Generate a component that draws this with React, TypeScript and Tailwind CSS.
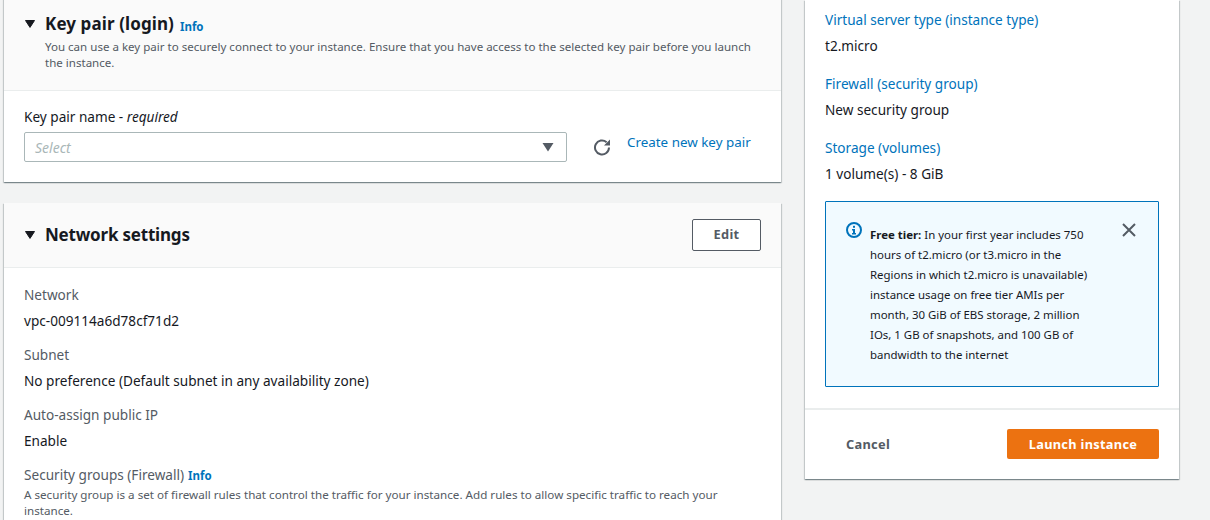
import React from "react";

const Info = () => <span className="text-[11.5px] font-bold text-[#0073bb] leading-4">Info</span>;

const Caret = () => (
  <svg width="14" height="14" viewBox="0 0 14 14" className="shrink-0">
    <path d="M1.5 3.5h9L6 10.4z" fill="#16191f" stroke="#16191f" strokeWidth="1" strokeLinejoin="round" />
  </svg>
);

const Field = ({ label, value, mt }: { label: string; value: string; mt: string }) => (
  <div className={mt}>
    <div className="text-[13.6px] leading-5 text-[#545b64]">{label}</div>
    <div className="mt-[6px] text-[13.6px] leading-5 text-[#16191f]">{value}</div>
  </div>
);

const SideField = ({ label, value, mt }: { label: string; value: string; mt: string }) => (
  <div className={mt}>
    <div className="text-[13.6px] leading-5 text-[#0073bb]">{label}</div>
    <div className="mt-[6px] text-[13.6px] leading-5 text-[#16191f]">{value}</div>
  </div>
);

const shadow = "shadow-[0_1px_1px_0_rgba(0,28,36,0.3),1px_1px_1px_0_rgba(0,28,36,0.15),-1px_1px_1px_0_rgba(0,28,36,0.15)]";

export default function App() {
  return (
    <div
      className="h-[520px] w-[1210px] overflow-hidden bg-[#f2f3f3] flex items-start"
      style={{ fontFamily: '"Noto Sans", sans-serif' }}
    >
      <div className="ml-1 w-[777px] shrink-0 -mt-2">
        <section className={`bg-white h-[190px] ${shadow}`}>
          <div className="h-[99px] bg-[#fafafa] border-b border-[#eaeded] pl-5 pr-5 pt-5">
            <div className="flex items-center h-6">
              <Caret />
              <h2 className="ml-[7px] text-[17px] font-bold leading-6 tracking-[0.1px] text-[#16191f]">Key pair (login)</h2>
              <span className="ml-[6px] mt-[5px] flex"><Info /></span>
            </div>
            <p className="ml-[21px] mt-[3px] text-[11.55px] leading-4 text-[#545b64] w-[715px]">
              You can use a key pair to securely connect to your instance. Ensure that you have access to the selected key pair before you launch the instance.
            </p>
          </div>
          <div className="px-5 pt-4">
            <div className="text-[13.6px] leading-5 text-[#16191f]">
              Key pair name - <em>required</em>
            </div>
            <div className="mt-[5px] flex items-start">
              <div className="w-[543px] h-[30px] border border-[#aab7b8] rounded-[2px] bg-white flex items-center justify-between pl-[10px] pr-[12px]">
                <span className="mt-[1px] text-[14px] italic text-[#aab7b8]">Select</span>
                <svg width="12" height="10" viewBox="0 0 12 10">
                  <path d="M0.5 1h11L6 9.5z" fill="#545b64" />
                </svg>
              </div>
              <svg className="ml-[26px] mt-[6px]" width="18" height="18" viewBox="0 0 18 18" fill="none">
                <path d="M16 9.5a7 7 0 1 1-2.4-5.3" stroke="#545b64" strokeWidth="2" />
                <path d="M17 1.5v6h-6z" fill="#545b64" />
              </svg>
              <span className="ml-4 text-[13.4px] leading-5 text-[#0073bb]">Create new key pair</span>
            </div>
          </div>
        </section>

        <section className={`mt-[21px] bg-white ${shadow}`}>
          <div className="h-[65px] bg-[#fafafa] border-b border-[#eaeded] pl-5 pr-5 flex items-center justify-between">
            <div className="flex items-center">
              <Caret />
              <h2 className="ml-[7px] text-[17px] font-bold leading-6 tracking-[-0.2px] text-[#16191f]">Network settings</h2>
            </div>
            <button className="w-[69px] h-8 border border-[#545b64] rounded-[2px] bg-white text-[12.8px] font-bold tracking-[0.3px] text-[#545b64]">Edit</button>
          </div>
          <div className="px-5 pt-[17px] pb-6">
            <Field label="Network" value="vpc-009114a6d78cf71d2" mt="" />
            <Field label="Subnet" value="No preference (Default subnet in any availability zone)" mt="mt-[14px]" />
            <Field label="Auto-assign public IP" value="Enable" mt="mt-[14px]" />
            <div className="mt-[14px] flex items-center">
              <span className="text-[13.6px] leading-5 text-[#545b64]">Security groups (Firewall)</span>
              <span className="ml-1 mt-[1px] flex"><Info /></span>
            </div>
            <p className="mt-[2px] text-[11.65px] leading-4 text-[#545b64] w-[715px]">
              A security group is a set of firewall rules that control the traffic for your instance. Add rules to allow specific traffic to reach your instance.
            </p>
          </div>
        </section>
      </div>

      <aside className={`ml-6 w-[374px] shrink-0 h-[479px] bg-white ${shadow}`}>
        <div className="h-[410px] border-b-2 border-[#eaeded] px-5 pt-[10px]">
          <SideField label="Virtual server type (instance type)" value="t2.micro" mt="" />
          <SideField label="Firewall (security group)" value="New security group" mt="mt-[18px]" />
          <SideField label="Storage (volumes)" value="1 volume(s) - 8 GiB" mt="mt-[18px]" />
          <div className="mt-[17px] h-[186px] border border-[#0073bb] rounded-[1px] bg-[#f1faff] flex items-start pl-5 pr-[21px] pt-[20px]">
            <svg className="shrink-0" width="16" height="16" viewBox="0 0 16 16" fill="none">
              <circle cx="8" cy="8" r="7" stroke="#0073bb" strokeWidth="2" />
              <rect x="7" y="7" width="2" height="5" fill="#0073bb" />
              <rect x="6" y="11" width="4" height="1.5" fill="#0073bb" />
              <rect x="6" y="7" width="2" height="1.5" fill="#0073bb" />
              <rect x="7" y="3.8" width="2" height="2" fill="#0073bb" />
            </svg>
            <p className="ml-2 mt-[3px] w-[232px] shrink-0 text-[11.45px] leading-5 text-[#16191f]">
              <b>Free tier:</b> In your first year includes 750 hours of t2.micro (or t3.micro in the Regions in which t2.micro is unavailable) instance usage on free tier AMIs per month, 30 GiB of EBS storage, 2 million IOs, 1 GB of snapshots, and 100 GB of bandwidth to the internet
            </p>
            <svg className="ml-auto shrink-0" width="16" height="16" viewBox="0 0 16 16" fill="none">
              <path d="M2 2l12 12M14 2L2 14" stroke="#545b64" strokeWidth="2" />
            </svg>
          </div>
        </div>
        <div className="h-[68px] pl-[41px] pr-5 flex items-center justify-between">
          <span className="mt-[1px] text-[12.8px] font-bold tracking-[0.3px] text-[#545b64]">Cancel</span>
          <button className="w-[152px] h-[30px] rounded-[2px] bg-[#ec7211] pt-[1px] text-[12.8px] font-bold tracking-[0.3px] text-white">Launch instance</button>
        </div>
      </aside>
    </div>
  );
}
